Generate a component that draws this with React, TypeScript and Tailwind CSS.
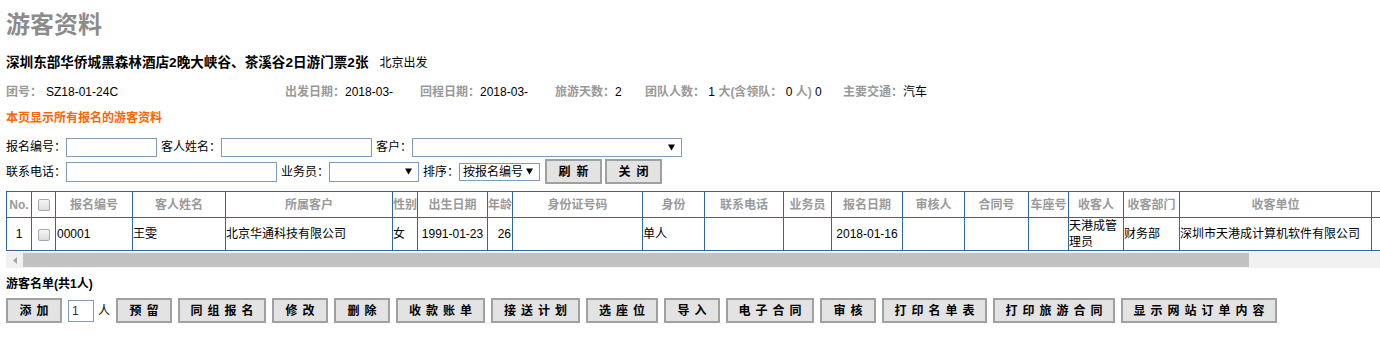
const columns = [
  { title: "No.", w: 25 },
  { title: "", w: 24, check: true },
  { title: "报名编号", w: 77 },
  { title: "客人姓名", w: 93 },
  { title: "所属客户", w: 167 },
  { title: "性别", w: 25 },
  { title: "出生日期", w: 70 },
  { title: "年龄", w: 25 },
  { title: "身份证号码", w: 130 },
  { title: "身份", w: 62 },
  { title: "联系电话", w: 79 },
  { title: "业务员", w: 48 },
  { title: "报名日期", w: 71 },
  { title: "审核人", w: 62 },
  { title: "合同号", w: 64 },
  { title: "车座号", w: 40 },
  { title: "收客人", w: 55 },
  { title: "收客部门", w: 56 },
  { title: "收客单位", w: 192 },
  { title: "预留期限", w: 133 },
];

const actions = [
  { label: "预留", w: "w-[56px]" },
  { label: "同组报名", w: "w-[88px]" },
  { label: "修改", w: "w-[56px]" },
  { label: "删除", w: "w-[56px]" },
  { label: "收款账单", w: "w-[89px]" },
  { label: "接送计划", w: "w-[89px]" },
  { label: "选座位", w: "w-[72px]" },
  { label: "导入", w: "w-[56px]" },
  { label: "电子合同", w: "w-[88px]" },
  { label: "审核", w: "w-[56px]" },
  { label: "打印名单表", w: "w-[105px]" },
  { label: "打印旅游合同", w: "w-[122px]" },
  { label: "显示网站订单内容", w: "w-[156px]" },
];

const Check = () => (
  <span className="inline-block h-[12px] w-[12px] rounded-[2px] border border-[#a9a9a9] bg-linear-to-b from-[#f6f6f6] to-[#dcdcdc] align-middle" />
);

const Arrow = () => (
  <svg width="7" height="7" viewBox="0 0 7 7">
    <path d="M0 0.5H7L3.5 6.5Z" fill="#000" />
  </svg>
);

const FakeSelect = ({ className, value }: { className: string; value?: string }) => (
  <div
    className={`flex items-center justify-between border border-[#7f9db9] bg-white pl-[3px] pr-[6px] ${className}`}
  >
    <span className="leading-none">{value}</span>
    <Arrow />
  </div>
);

const Label = ({ children, className = "" }: { children: string; className?: string }) => (
  <span className={`whitespace-nowrap ${className}`}>{children}</span>
);

export default function App() {
  return (
    <div className="w-[1380px] overflow-hidden bg-white pl-[6px] font-['Liberation_Sans','Noto_Sans_CJK_SC',sans-serif] text-[12px] text-black">
      {/* page title */}
      <h1 className="h-[40px] pt-[10px] text-[24px] leading-[30px] font-bold text-[#8c8c8c]">游客资料</h1>

      <div className="mt-[13px] flex h-[20px] items-center leading-[20px] whitespace-nowrap">
        <span className="text-[13.6px] font-bold">深圳东部华侨城黑森林酒店2晚大峡谷、茶溪谷2日游门票2张</span>
        <span className="ml-[11px] text-[12px]">北京出发</span>
      </div>

      {/* tour info */}
      <div className="mt-[9px] flex h-[20px] items-center leading-[20px] whitespace-nowrap">
        <div className="w-[279px]">
          <span className="font-bold text-[#999]">团号：</span>
          <span className="ml-[4px]">SZ18-01-24C</span>
        </div>
        <div className="w-[135px]">
          <span className="font-bold text-[#999]">出发日期：</span>2018-03-
        </div>
        <div className="w-[135px]">
          <span className="font-bold text-[#999]">回程日期：</span>2018-03-
        </div>
        <div className="w-[90px]">
          <span className="font-bold text-[#999]">旅游天数：</span>2
        </div>
        <div className="w-[198px]">
          <span className="font-bold text-[#999]">团队人数：</span> 1{" "}
          <span className="font-bold text-[#999]">大(含领队：</span> 0{" "}
          <span className="font-bold text-[#999]">人)</span> 0
        </div>
        <div>
          <span className="font-bold text-[#999]">主要交通：</span>汽车
        </div>
      </div>

      <div className="mt-[6px] h-[20px] leading-[20px] font-bold text-[#ff6600]">本页显示所有报名的游客资料</div>

      {/* search form */}
      <div className="mt-[9px] flex h-[20px] items-center">
        <Label>报名编号：</Label>
        <input className="h-[19px] w-[91px] border border-[#7f9db9] bg-white px-[2px] outline-none" />
        <Label className="ml-[4px]">客人姓名：</Label>
        <input className="h-[19px] w-[151px] border border-[#7f9db9] bg-white px-[2px] outline-none" />
        <Label className="ml-[4px]">客户：</Label>
        <FakeSelect className="h-[19px] w-[270px]" />
      </div>

      <div className="mt-[2px] flex h-[25px] items-center">
        <Label>联系电话：</Label>
        <input className="h-[20px] w-[211px] border border-[#7f9db9] bg-white px-[2px] outline-none" />
        <Label className="ml-[4px]">业务员：</Label>
        <FakeSelect className="h-[20px] w-[90px]" />
        <Label className="ml-[4px]">排序：</Label>
        <FakeSelect className="h-[18px] w-[81px]" value="按报名编号" />
        <button className="ml-[5px] flex h-[25px] w-[57px] items-center justify-center border-2 border-[#a0a0a0] bg-[#e3e3e3] pl-[6px] font-bold tracking-[6px]">
          刷新
        </button>
        <button className="ml-[3px] flex h-[25px] w-[57px] items-center justify-center border-2 border-[#a0a0a0] bg-[#e3e3e3] pl-[6px] font-bold tracking-[6px]">
          关闭
        </button>
      </div>

      {/* visitor table */}
      <div className="mt-[7px] overflow-hidden">
        <table className="w-[1498px] table-fixed border-collapse">
          <colgroup>
            {columns.map((c) => (
              <col key={c.title + c.w} style={{ width: c.w }} />
            ))}
          </colgroup>
          <thead>
            <tr>
              {columns.map((c, i) => (
                <th
                  key={i}
                  className="h-[26px] overflow-hidden border border-[#336699] p-0 text-center text-[12px] leading-[16px] font-bold whitespace-nowrap text-[#9a9a9a]"
                >
                  {c.check ? <Check /> : c.title}
                </th>
              ))}
            </tr>
          </thead>
          <tbody>
            <tr className="leading-[16px]">
              <td className="h-[32px] border border-[#336699] p-0 text-center">1</td>
              <td className="border border-[#336699] p-0 text-center">
                <Check />
              </td>
              <td className="border border-[#336699] p-0 pl-[1px]">00001</td>
              <td className="border border-[#336699] p-0">王雯</td>
              <td className="border border-[#336699] p-0">北京华通科技有限公司</td>
              <td className="border border-[#336699] p-0">女</td>
              <td className="border border-[#336699] p-0 text-center whitespace-nowrap">1991-01-23</td>
              <td className="border border-[#336699] p-0 pr-[1px] text-right">26</td>
              <td className="border border-[#336699] p-0"></td>
              <td className="border border-[#336699] p-0">单人</td>
              <td className="border border-[#336699] p-0"></td>
              <td className="border border-[#336699] p-0"></td>
              <td className="border border-[#336699] p-0 text-center whitespace-nowrap">2018-01-16</td>
              <td className="border border-[#336699] p-0"></td>
              <td className="border border-[#336699] p-0"></td>
              <td className="border border-[#336699] p-0"></td>
              <td className="border border-[#336699] p-0">天港成管理员</td>
              <td className="border border-[#336699] p-0">财务部</td>
              <td className="border border-[#336699] p-0 whitespace-nowrap">深圳市天港成计算机软件有限公司</td>
              <td className="border border-[#336699] p-0"></td>
            </tr>
          </tbody>
        </table>
      </div>

      {/* horizontal scrollbar */}
      <div className="mt-[1px] flex h-[16px] items-start bg-[#f1f1f1]">
        <div className="flex h-[16px] w-[17px] items-center justify-center">
          <svg width="4" height="7" viewBox="0 0 4 7">
            <path d="M4 0V7L0 3.5Z" fill="#a3a3a3" />
          </svg>
        </div>
        <div className="mt-[1px] h-[14px] w-[1226px] bg-[#c1c1c1]" />
      </div>

      <div className="mt-[6px] h-[20px] leading-[20px] font-bold">游客名单(共1人)</div>

      {/* action buttons */}
      <div className="mt-[4px] flex h-[25px] items-center gap-[6px]">
        <button className="flex h-[25px] w-[56px] items-center justify-center border-2 border-[#a0a0a0] bg-[#e3e3e3] pl-[5px] font-bold tracking-[5px]">
          添加
        </button>
        <div className="flex items-center gap-[4px]">
          <input
            defaultValue="1"
            className="h-[22px] w-[26px] border border-[#7f9db9] bg-white px-[3px] text-[#333] outline-none"
          />
          <span>人</span>
        </div>
        {actions.map((a) => (
          <button
            key={a.label}
            className={`flex h-[25px] items-center justify-center border-2 border-[#a0a0a0] bg-[#e3e3e3] pl-[5px] font-bold tracking-[5px] ${a.w}`}
          >
            {a.label}
          </button>
        ))}
      </div>
    </div>
  );
}
